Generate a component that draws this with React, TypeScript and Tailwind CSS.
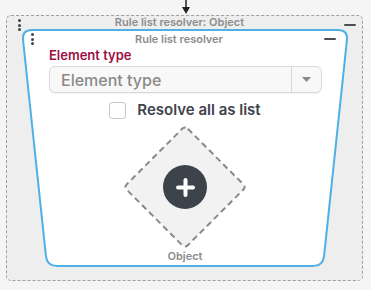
import React from "react";

function Dots({ className = "" }: { className?: string }) {
  return (
    <div className={"flex flex-col gap-[1.5px] " + className}>
      <div className="w-[3px] h-[3px] rounded-full bg-[#3e444a]" />
      <div className="w-[3px] h-[3px] rounded-full bg-[#3e444a]" />
      <div className="w-[3px] h-[3px] rounded-full bg-[#3e444a]" />
    </div>
  );
}

export default function App() {
  return (
    <div className="w-[371px] h-[290px] bg-[#f5f5f5] font-['Inter',sans-serif] overflow-hidden">
      <div className="flex h-[15px] justify-center">
        <svg width="10" height="15" viewBox="0 0 10 15">
          <line x1="5" y1="0" x2="5" y2="8" stroke="#222" strokeWidth="1.5" />
          <polygon points="1,7 9,7 5,14" fill="#222" />
        </svg>
      </div>
      <div className="ml-[6px] w-[357px] h-[266px] rounded-[5px] border border-dashed border-[#a0a0a0] bg-[#eeeeee] flex flex-col">
        <div className="flex items-start h-[13px]">
          <Dots className="ml-[11px] mt-[3px]" />
          <div className="flex-1 pr-[6px] text-center text-[11px] leading-[13px] font-semibold text-[#8c8c8c] whitespace-nowrap">
            Rule list resolver: Object
          </div>
          <div className="w-[12px] h-[2px] mt-[8px] mr-[6px] rounded-full bg-[#4a4f55]" />
        </div>
        <div className="relative ml-[14px] w-[328px] h-[238px] flex flex-col">
          <svg className="absolute inset-0" width="328" height="238" viewBox="0 0 328 238">
            <path
              d="M 11 1 L 317 1 Q 327 1 325.95 10.94 L 303.05 227.06 Q 302 237 292 237 L 36 237 Q 26 237 24.95 227.06 L 2.05 10.94 Q 1 1 11 1 Z"
              fill="#ffffff"
              stroke="#4fb0e8"
              strokeWidth="2"
            />
          </svg>
          <div className="relative flex flex-col">
            <div className="flex items-center h-[12px] mt-[4px]">
              <Dots className="ml-[10px]" />
              <div className="flex-1 text-center text-[11px] leading-[12px] font-semibold text-[#8c8c8c] whitespace-nowrap">
                Rule list resolver
              </div>
              <div className="w-[12px] h-[2px] mr-[13px] rounded-full bg-[#4a4f55]" />
            </div>
            <div className="mt-[2px] ml-[28px] text-[13px] leading-[16px] font-semibold text-[#9d0f44]">
              Element type
            </div>
            <div className="mt-[3px] ml-[28px] w-[273px] h-[27px] flex rounded-[6px] border border-[#d9d9d9] bg-[#f8f8f8] shadow-[0_1px_1px_rgba(0,0,0,0.05)]">
              <div className="flex-1 flex items-center pl-[11px] text-[16px] font-medium text-[#8a8a8a]">
                Element type
              </div>
              <div className="w-[30px] border-l border-[#d9d9d9] flex items-center justify-center">
                <svg width="9" height="5" viewBox="0 0 9 5">
                  <polygon points="0,0 9,0 4.5,5" fill="#8a8a8a" />
                </svg>
              </div>
            </div>
            <div className="mt-[7px] h-[20px] flex items-center justify-center gap-[11px]">
              <div className="w-[17px] h-[17px] rounded-[3px] border border-[#c8c8c8] bg-white" />
              <div className="text-[15px] font-semibold text-[#3d434b] leading-[20px]">Resolve all as list</div>
            </div>
            <div className="mt-[5px] self-center relative w-[124px] h-[124px] flex items-center justify-center">
              <svg className="absolute inset-0" width="124" height="124" viewBox="0 0 124 124">
                <path
                  d="M 64.83 3.83 L 120.17 59.17 Q 123 62 120.17 64.83 L 64.83 120.17 Q 62 123 59.17 120.17 L 3.83 64.83 Q 1 62 3.83 59.17 L 59.17 3.83 Q 62 1 64.83 3.83 Z"
                  fill="#f2f2f2"
                  stroke="#8a8a8a"
                  strokeWidth="2"
                  strokeDasharray="6 4"
                />
              </svg>
              <div className="relative w-[44px] h-[44px] rounded-full bg-[#3c434a] flex items-center justify-center">
                <svg width="19" height="19" viewBox="0 0 19 19">
                  <line x1="9.5" y1="2" x2="9.5" y2="17" stroke="#fff" strokeWidth="4" strokeLinecap="round" />
                  <line x1="2" y1="9.5" x2="17" y2="9.5" stroke="#fff" strokeWidth="4" strokeLinecap="round" />
                </svg>
              </div>
            </div>
            <div className="mt-[1px] text-center text-[11px] leading-[13px] font-semibold text-[#8c8c8c]">
              Object
            </div>
          </div>
        </div>
      </div>
    </div>
  );
}
